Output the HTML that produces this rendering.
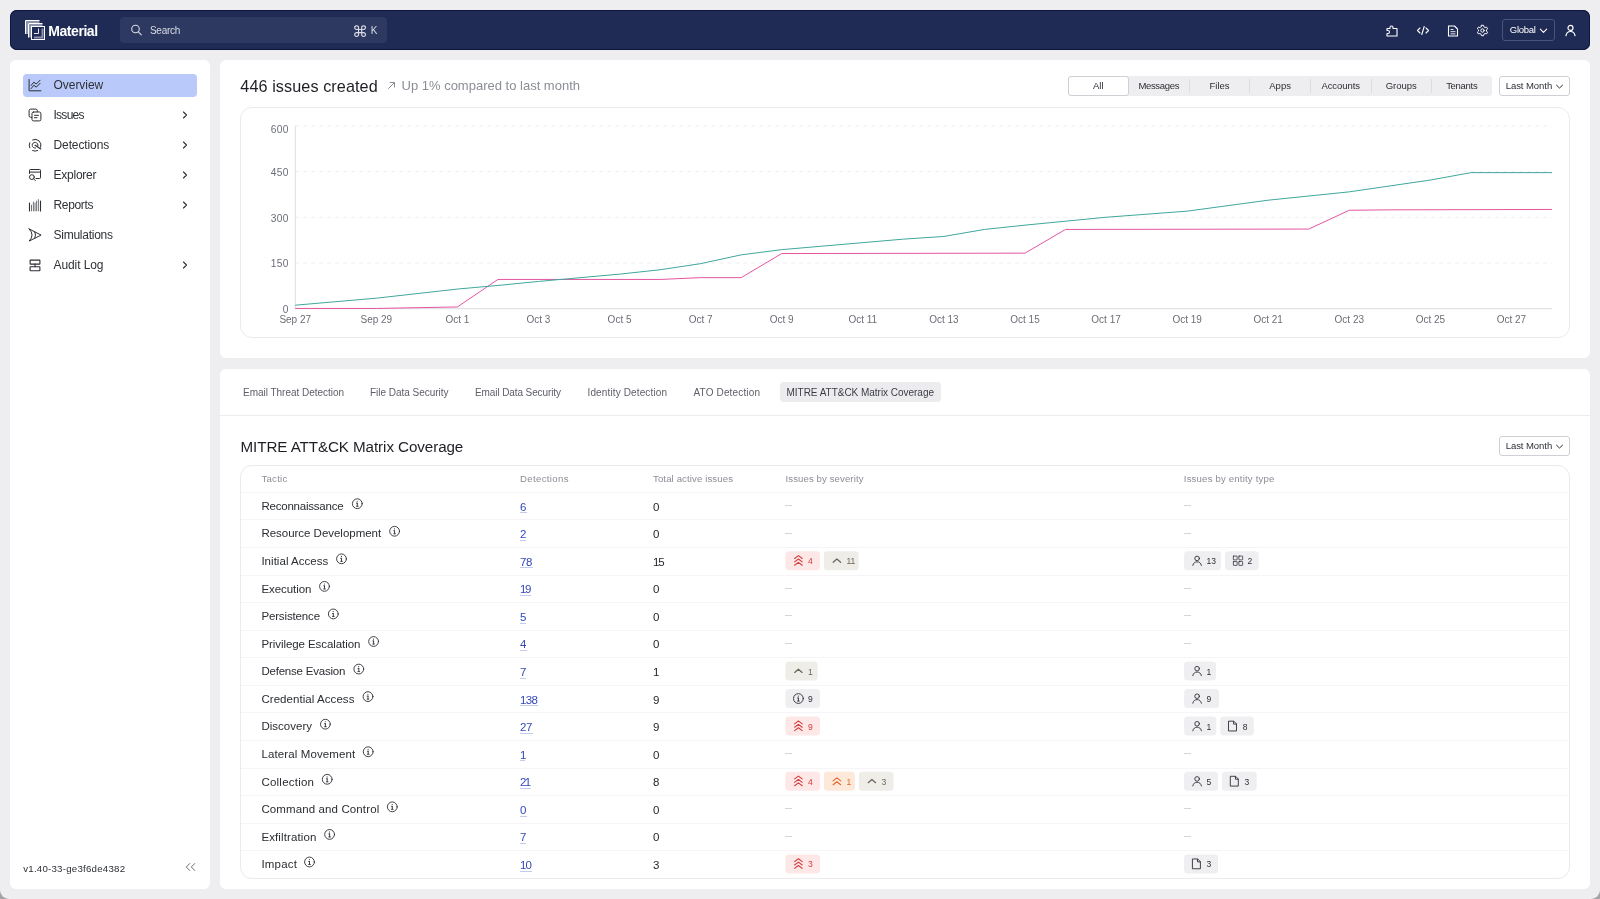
<!DOCTYPE html>
<html lang="en"><head><meta charset="utf-8"><title>Material</title><style>
*{box-sizing:border-box;margin:0;padding:0}
html{background:#a3a3a6}
html,body{width:1600px;height:899px;overflow:hidden;background:#a3a3a6;font-family:"Liberation Sans",sans-serif;color:#1d1f24}
#bgl{position:absolute;left:0;top:0;width:1600px;height:899px;background:#eeeef0;border-radius:0 0 9px 9px}
#root{position:absolute;left:0;top:0;width:1600px;height:899px;will-change:transform}
.abs{position:absolute}
.t{position:absolute;white-space:nowrap}
#topbar{position:absolute;left:10px;top:10px;width:1580px;height:40px;background:#1f2a55;border-radius:7px;box-shadow:inset 0 0 0 1px #0e1541}
#search{position:absolute;left:110px;top:7px;width:267px;height:26px;background:#2d3960;border-radius:4px}
#side{position:absolute;left:10px;top:60px;width:200px;height:829px;background:#fff;border-radius:6px}
#card1{position:absolute;left:220px;top:60px;width:1370px;height:298px;background:#fff;border-radius:6px}
#card2{position:absolute;left:220px;top:369px;width:1370px;height:520px;background:#fff;border-radius:6px}
svg{position:absolute;overflow:visible}
</style></head><body>
<div id="bgl"></div>
<div id="root">
<div id="topbar">
<svg style="left:14px;top:9px" width="25" height="23" viewBox="0 0 25 23" fill="none" stroke="#fff" stroke-width="1" stroke-linecap="butt" stroke-linejoin="miter" ><path d="M3 15V3H15.500" stroke="#8d94b0" stroke-width="2"/><path d="M1.500 15V1.500H15.500" stroke="#fff"/><path d="M6 18.500V6H18.500" stroke="#8d94b0" stroke-width="2"/><path d="M4.500 18.500V4.500H18.500" stroke="#fff"/><rect x="7.500" y="7.500" width="13" height="13" stroke="#fff" fill="#1f2a55"/><path d="M10 14.500H14.500V9.500" stroke="#e6e8f0" stroke-width="1"/><path d="M10 18.500H18.500V9.500" stroke="#8d94b0" stroke-width="2"/></svg>
<div class="t" style="left:38.30px;top:11.60px;font-size:14px;line-height:19px;color:#fff;font-weight:bold;letter-spacing:-0.444px;">Material</div>
<div id="search">
<svg style="left:10px;top:7px" width="13" height="13" viewBox="0 0 13 13" fill="none" stroke="#d9dce6" stroke-width="1.1" stroke-linecap="round" stroke-linejoin="round" ><g transform="translate(0.50 0.00)"><circle cx="5" cy="5" r="3.800"/><path d="M7.800 7.800L10.800 10.800"/></g></svg>
<div class="t" style="left:30.00px;top:6.70px;font-size:10px;line-height:14px;color:#d9dce6;letter-spacing:-0.297px;">Search</div>
<div class="t" style="left:232.200px;top:6.500px;font-size:15.500px;line-height:16px;color:#d9dce6;font-family:'DejaVu Sans',sans-serif">&#8984;</div>
<div class="t" style="left:250.80px;top:6.70px;font-size:10px;line-height:14px;color:#d9dce6;">K</div>
</div>
<svg style="left:1376px;top:15px" width="14" height="13" viewBox="0 0 14 13" fill="none" stroke="#fff" stroke-width="1.1" stroke-linecap="round" stroke-linejoin="round" ><path d="M1 3.500H4V2.500A1.500 1.500 0 0 1 7 2.500V3.500H11V11H1V8.500H2A1.500 1.500 0 0 0 2 5.500H1Z"/></svg>
<svg style="left:1406px;top:15px" width="14" height="11" viewBox="0 0 14 11" fill="none" stroke="#fff" stroke-width="1.1" stroke-linecap="round" stroke-linejoin="round" ><g transform="translate(0.50 0.50)"><path d="M3.500 2.500L1 5L3.500 7.500"/><path d="M9.500 2.500L12 5L9.500 7.500"/><path d="M7.700 1L5.300 9"/></g></svg>
<svg style="left:1437px;top:15px" width="12" height="13" viewBox="0 0 12 13" fill="none" stroke="#fff" stroke-width="1.1" stroke-linecap="round" stroke-linejoin="round" ><g transform="translate(0.50 0.00)"><path d="M1 1H7L10 4V11H1Z"/><path d="M3 4.500H6M3 6.700H8M3 8.900H8" stroke-width="0.900" stroke-linecap="butt"/></g></svg>
<svg style="left:1466px;top:14px" width="13" height="13" viewBox="0 0 13 13" fill="none" stroke="#fff" stroke-width="1" stroke-linecap="round" stroke-linejoin="round" ><g transform="translate(0.50 0.50)"><circle cx="6" cy="6" r="1.700"/><path d="M5 0.800H7L7.400 2.300L8.600 3L10.100 2.600L11.100 4.300L10 5.400V6.600L11.100 7.700L10.100 9.400L8.600 9L7.400 9.700L7 11.200H5L4.600 9.700L3.400 9L1.900 9.400L0.900 7.700L2 6.600V5.400L0.900 4.300L1.900 2.600L3.400 3L4.600 2.300Z"/></g></svg>
<div class="abs" style="left:1492px;top:9px;width:53px;height:21.500px;border:1px solid #4a547a;border-radius:3px"></div>
<div class="t" style="left:1499.80px;top:13.30px;font-size:9.5px;line-height:13px;color:#fff;letter-spacing:-0.272px;">Global</div>
<svg style="left:1529px;top:18px" width="9" height="7" viewBox="0 0 9 7" fill="none" stroke="#fff" stroke-width="1.1" stroke-linecap="round" stroke-linejoin="round" ><g transform="translate(0.50 0.00)"><path d="M0.800 1.200L4 4.300L7.200 1.200"/></g></svg>
<svg style="left:1555px;top:14px" width="12" height="14" viewBox="0 0 12 14" fill="none" stroke="#fff" stroke-width="1.2" stroke-linecap="round" stroke-linejoin="round" ><g transform="translate(0.00 0.30)"><circle cx="5.500" cy="3.600" r="2.500"/><path d="M1 11.400C1.400 8.400 3.300 7.200 5.500 7.200S9.600 8.400 10 11.400"/></g></svg>
</div>
<div id="side">
<div class="abs" style="left:13px;top:13.500px;width:174px;height:23px;background:#b9c9fa;border-radius:4px"></div>
<div class="t" style="left:43.50px;top:17.30px;font-size:12px;line-height:16px;color:#2e3136;letter-spacing:-0.037px;">Overview</div>
<div class="t" style="left:43.50px;top:47.30px;font-size:12px;line-height:16px;color:#2e3136;letter-spacing:-0.736px;">Issues</div>
<svg style="left:171px;top:50px" width="9" height="10" viewBox="0 0 9 10" fill="none" stroke="#2b2e33" stroke-width="1.1" stroke-linecap="round" stroke-linejoin="round" ><g transform="translate(0.00 0.50)"><path d="M2.500 1.500L5.500 4.500L2.500 7.500"/></g></svg>
<div class="t" style="left:43.50px;top:77.30px;font-size:12px;line-height:16px;color:#2e3136;letter-spacing:-0.105px;">Detections</div>
<svg style="left:171px;top:80px" width="9" height="10" viewBox="0 0 9 10" fill="none" stroke="#2b2e33" stroke-width="1.1" stroke-linecap="round" stroke-linejoin="round" ><g transform="translate(0.00 0.50)"><path d="M2.500 1.500L5.500 4.500L2.500 7.500"/></g></svg>
<div class="t" style="left:43.50px;top:107.30px;font-size:12px;line-height:16px;color:#2e3136;letter-spacing:-0.241px;">Explorer</div>
<svg style="left:171px;top:110px" width="9" height="10" viewBox="0 0 9 10" fill="none" stroke="#2b2e33" stroke-width="1.1" stroke-linecap="round" stroke-linejoin="round" ><g transform="translate(0.00 0.50)"><path d="M2.500 1.500L5.500 4.500L2.500 7.500"/></g></svg>
<div class="t" style="left:43.50px;top:137.30px;font-size:12px;line-height:16px;color:#2e3136;letter-spacing:-0.336px;">Reports</div>
<svg style="left:171px;top:140px" width="9" height="10" viewBox="0 0 9 10" fill="none" stroke="#2b2e33" stroke-width="1.1" stroke-linecap="round" stroke-linejoin="round" ><g transform="translate(0.00 0.50)"><path d="M2.500 1.500L5.500 4.500L2.500 7.500"/></g></svg>
<div class="t" style="left:43.50px;top:167.30px;font-size:12px;line-height:16px;color:#2e3136;letter-spacing:-0.253px;">Simulations</div>
<div class="t" style="left:43.50px;top:197.30px;font-size:12px;line-height:16px;color:#2e3136;letter-spacing:-0.088px;">Audit Log</div>
<svg style="left:171px;top:200px" width="9" height="10" viewBox="0 0 9 10" fill="none" stroke="#2b2e33" stroke-width="1.1" stroke-linecap="round" stroke-linejoin="round" ><g transform="translate(0.00 0.50)"><path d="M2.500 1.500L5.500 4.500L2.500 7.500"/></g></svg>
<svg style="left:18px;top:19px" width="14" height="14" viewBox="0 0 14 14" fill="none" stroke="#2b2e33" stroke-width="1" stroke-linecap="round" stroke-linejoin="round" ><g transform="translate(0.50 0.00)"><path d="M0.600 0.500V11.800H12.400"/><path d="M2.600 6.500L5.300 3.200L7.800 5L11.600 1.200"/><path d="M2.600 9.600L5.300 6.300L7.800 8.100L11.600 4.300"/></g></svg>
<svg style="left:18px;top:48px" width="14" height="14" viewBox="0 0 14 14" fill="none" stroke="#2b2e33" stroke-width="1" stroke-linecap="round" stroke-linejoin="round" ><g transform="translate(0.50 0.50)"><path d="M3.200 8.800H2A1.500 1.500 0 0 1 0.600 7.300V2A1.500 1.500 0 0 1 2 0.600H7.300A1.500 1.500 0 0 1 8.800 2V3.200"/><rect x="3.500" y="3.500" width="8.900" height="8.900" rx="1.500"/><path d="M6 6.800H10M6 9.200H8.500"/></g></svg>
<svg style="left:18px;top:78px" width="14" height="14" viewBox="0 0 14 14" fill="none" stroke="#2b2e33" stroke-width="1" stroke-linecap="round" stroke-linejoin="round" ><g transform="translate(0.60 0.75)"><path d="M1.150 8.990A5.900 5.900 0 0 1 1.150 4.010"/><path d="M4.010 1.150A5.900 5.900 0 0 1 12.040 8.520"/><path d="M8.990 11.850A5.900 5.900 0 0 1 4.010 11.850"/><path d="M7 9.360A2.900 2.900 0 1 1 9.300 7.250"/><path d="M6.500 6.500L12.200 10.200" stroke-width="1.200"/></g></svg>
<svg style="left:18px;top:108px" width="14" height="14" viewBox="0 0 14 14" fill="none" stroke="#2b2e33" stroke-width="1" stroke-linecap="round" stroke-linejoin="round" ><g transform="translate(0.50 0.50)"><path d="M1 5V1.800A0.800 0.800 0 0 1 1.800 1H11.200A0.800 0.800 0 0 1 12 1.800V9.200A0.800 0.800 0 0 1 11.200 10H7.500"/><path d="M1 3.600H12"/><circle cx="3.400" cy="8.600" r="2.400"/><path d="M5.200 10.400L6.800 12"/></g></svg>
<svg style="left:18px;top:139px" width="14" height="13" viewBox="0 0 14 13" fill="none" stroke="#2b2e33" stroke-width="1" stroke-linecap="round" stroke-linejoin="round" ><g transform="translate(0.50 0.00)"><path d="M1 4V11.900M12 2.100V11.900" stroke-width="1.100"/><path d="M3 6.200V11.900M4.900 3.100V11.900M6.500 4V11.900M8.100 2.100V11.900M9.900 0.600V11.900" stroke="#6f7378"/></g></svg>
<svg style="left:18px;top:168px" width="14" height="14" viewBox="0 0 14 14" fill="none" stroke="#2b2e33" stroke-width="1" stroke-linecap="round" stroke-linejoin="round" ><g transform="translate(0.50 0.50)"><path d="M0.600 0.400L12.600 6.600L0.600 12.600Q6.600 6.500 0.600 0.400Z"/><path d="M6.300 3.350Q7.900 6.500 6.300 9.750"/></g></svg>
<svg style="left:19px;top:199px" width="12" height="13" viewBox="0 0 12 13" fill="none" stroke="#2b2e33" stroke-width="1.1" stroke-linecap="round" stroke-linejoin="round" ><g transform="translate(0.50 0.50)"><rect x="0.600" y="0.600" width="9.800" height="4" rx="0.400"/><rect x="0.600" y="7.200" width="9.800" height="4" rx="0.400"/><path d="M5.500 4.600V7.200"/></g></svg>
<div class="t" style="left:13.20px;top:801.80px;font-size:9.7px;line-height:14px;color:#2b2e33;letter-spacing:0.230px;">v1.40-33-ge3f6de4382</div>
<svg style="left:175px;top:802px" width="12" height="11" viewBox="0 0 12 11" fill="none" stroke="#6b6e76" stroke-width="1" stroke-linecap="round" stroke-linejoin="round" ><path d="M4.800 1.500L1.300 5L4.800 8.500"/><path d="M9.800 1.500L6.300 5L9.800 8.500"/></svg>
</div>
<div id="card1">
<div class="t" style="left:20.30px;top:15.80px;font-size:16.2px;line-height:21px;color:#1d1f24;letter-spacing:0.089px;">446 issues created</div>
<svg style="left:167px;top:21px" width="10" height="10" viewBox="0 0 10 10" fill="none" stroke="#8b8e96" stroke-width="1" stroke-linecap="round" stroke-linejoin="round" ><path d="M1.500 7.500L7.500 1.500M3 1.500H7.500V6"/></svg>
<div class="t" style="left:181.50px;top:16.60px;font-size:13px;line-height:18px;color:#8b8e96;letter-spacing:0.001px;">Up 1% compared to last month</div>
<div class="abs" style="left:848px;top:16px;width:424px;height:20px;background:#eeeef0;border-radius:3px"></div>
<div class="abs" style="left:848px;top:16px;width:61px;height:20px;background:#fff;border:1px solid #cfd0d6;border-radius:3px"></div>
<div class="t" style="left:873.02px;top:19.10px;font-size:9.5px;line-height:13px;color:#2b2e33;">All</div>
<div class="t" style="left:918.40px;top:19.10px;font-size:9.5px;line-height:13px;color:#2b2e33;letter-spacing:-0.328px;">Messages</div>
<div class="t" style="left:989.47px;top:19.10px;font-size:9.5px;line-height:13px;color:#2b2e33;">Files</div>
<div class="abs" style="left:968.7px;top:19px;width:1px;height:14px;background:#dcdde2"></div>
<div class="t" style="left:1049.27px;top:19.10px;font-size:9.5px;line-height:13px;color:#2b2e33;">Apps</div>
<div class="abs" style="left:1029.3px;top:19px;width:1px;height:14px;background:#dcdde2"></div>
<div class="t" style="left:1101.45px;top:19.10px;font-size:9.5px;line-height:13px;color:#2b2e33;letter-spacing:-0.082px;">Accounts</div>
<div class="abs" style="left:1089.9px;top:19px;width:1px;height:14px;background:#dcdde2"></div>
<div class="t" style="left:1165.72px;top:19.10px;font-size:9.5px;line-height:13px;color:#2b2e33;">Groups</div>
<div class="abs" style="left:1150.5px;top:19px;width:1px;height:14px;background:#dcdde2"></div>
<div class="t" style="left:1226.15px;top:19.10px;font-size:9.5px;line-height:13px;color:#2b2e33;letter-spacing:-0.296px;">Tenants</div>
<div class="abs" style="left:1211.1px;top:19px;width:1px;height:14px;background:#dcdde2"></div>
<div class="abs" style="left:1279px;top:16px;width:71px;height:20px;border:1px solid #cfd0d6;border-radius:3px;background:#fff"></div>
<div class="t" style="left:1285.70px;top:19.10px;font-size:9.5px;line-height:13px;color:#2b2e33;letter-spacing:-0.055px;">Last Month</div>
<svg style="left:1335px;top:24px" width="9" height="7" viewBox="0 0 9 7" fill="none" stroke="#2b2e33" stroke-width="1" stroke-linecap="round" stroke-linejoin="round" ><g transform="translate(0.50 0.00)"><path d="M1 1.200L4 4L7 1.200"/></g></svg>
<div class="abs" style="left:20px;top:47px;width:1330px;height:231px;border:1px solid #ebebee;border-radius:12px"></div>
<svg style="left:0;top:0" width="1370" height="298" viewBox="0 0 1370 298" font-family="Liberation Sans, sans-serif"><line x1="75.25" x2="1332" y1="203.00" y2="203.00" stroke="#eeeef1" stroke-width="1" stroke-dasharray="4 4"/><line x1="75.25" x2="1332" y1="157.30" y2="157.30" stroke="#eeeef1" stroke-width="1" stroke-dasharray="4 4"/><line x1="75.25" x2="1332" y1="111.60" y2="111.60" stroke="#eeeef1" stroke-width="1" stroke-dasharray="4 4"/><line x1="75.25" x2="1332" y1="65.90" y2="65.90" stroke="#eeeef1" stroke-width="1" stroke-dasharray="4 4"/><line x1="75.25" x2="75.25" y1="65.90" y2="248.70" stroke="#dcdce0" stroke-width="1"/><line x1="75.25" x2="1332" y1="248.70" y2="248.70" stroke="#dcdce0" stroke-width="1"/><text x="68.800" y="252.90" text-anchor="end" font-size="10.2" letter-spacing="0.35" fill="#6b6e76">0</text><text x="68.800" y="207.20" text-anchor="end" font-size="10.2" letter-spacing="0.35" fill="#6b6e76">150</text><text x="68.800" y="161.50" text-anchor="end" font-size="10.2" letter-spacing="0.35" fill="#6b6e76">300</text><text x="68.800" y="115.80" text-anchor="end" font-size="10.2" letter-spacing="0.35" fill="#6b6e76">450</text><text x="68.800" y="73.30" text-anchor="end" font-size="10.2" letter-spacing="0.35" fill="#6b6e76">600</text><text x="75.25" y="263.300" text-anchor="middle" font-size="10" fill="#6b6e76">Sep 27</text><text x="156.33" y="263.300" text-anchor="middle" font-size="10" fill="#6b6e76">Sep 29</text><text x="237.41" y="263.300" text-anchor="middle" font-size="10" fill="#6b6e76">Oct 1</text><text x="318.49" y="263.300" text-anchor="middle" font-size="10" fill="#6b6e76">Oct 3</text><text x="399.57" y="263.300" text-anchor="middle" font-size="10" fill="#6b6e76">Oct 5</text><text x="480.65" y="263.300" text-anchor="middle" font-size="10" fill="#6b6e76">Oct 7</text><text x="561.73" y="263.300" text-anchor="middle" font-size="10" fill="#6b6e76">Oct 9</text><text x="642.81" y="263.300" text-anchor="middle" font-size="10" fill="#6b6e76">Oct 11</text><text x="723.89" y="263.300" text-anchor="middle" font-size="10" fill="#6b6e76">Oct 13</text><text x="804.97" y="263.300" text-anchor="middle" font-size="10" fill="#6b6e76">Oct 15</text><text x="886.05" y="263.300" text-anchor="middle" font-size="10" fill="#6b6e76">Oct 17</text><text x="967.13" y="263.300" text-anchor="middle" font-size="10" fill="#6b6e76">Oct 19</text><text x="1048.21" y="263.300" text-anchor="middle" font-size="10" fill="#6b6e76">Oct 21</text><text x="1129.29" y="263.300" text-anchor="middle" font-size="10" fill="#6b6e76">Oct 23</text><text x="1210.37" y="263.300" text-anchor="middle" font-size="10" fill="#6b6e76">Oct 25</text><text x="1291.45" y="263.300" text-anchor="middle" font-size="10" fill="#6b6e76">Oct 27</text><polyline fill="none" stroke="#e5559f" stroke-width="1" stroke-linejoin="round" points="75.25,248.45 156.33,248.45 237.41,246.95 277.95,219.45 440.11,219.45 480.65,217.65 521.19,217.65 561.73,193.55 804.97,193.15 845.51,169.45 1088.75,169.05 1129.29,150.25 1169.83,149.85 1331.99,149.45"/><polyline fill="none" stroke="#3fa79c" stroke-width="1" stroke-linejoin="round" points="75.25,245.20 156.33,238.20 237.41,229.05 277.95,225.45 318.49,221.45 399.57,214.15 440.11,209.75 480.65,203.65 521.19,194.85 561.73,189.65 642.81,182.65 683.35,179.15 723.89,176.45 764.43,169.45 804.97,165.15 886.05,157.25 967.13,151.15 1048.21,140.20 1129.29,131.85 1210.37,120.05 1250.91,112.65 1331.99,112.65"/></svg>
</div>
<div id="card2">
<div class="t" style="left:23.00px;top:16.60px;font-size:10px;line-height:14px;color:#5d6068;letter-spacing:-0.025px;">Email Threat Detection</div>
<div class="t" style="left:150.00px;top:16.60px;font-size:10px;line-height:14px;color:#5d6068;letter-spacing:-0.024px;">File Data Security</div>
<div class="t" style="left:255.00px;top:16.60px;font-size:10px;line-height:14px;color:#5d6068;letter-spacing:-0.100px;">Email Data Security</div>
<div class="t" style="left:367.50px;top:16.60px;font-size:10px;line-height:14px;color:#5d6068;letter-spacing:0.131px;">Identity Detection</div>
<div class="t" style="left:473.50px;top:16.60px;font-size:10px;line-height:14px;color:#5d6068;letter-spacing:0.153px;">ATO Detection</div>
<div class="abs" style="left:559.5px;top:12.8px;width:161px;height:20px;background:#ececef;border-radius:4px"></div>
<div class="t" style="left:566.50px;top:16.60px;font-size:10px;line-height:14px;color:#3a3d44;letter-spacing:-0.025px;">MITRE ATT&amp;CK Matrix Coverage</div>
<div class="abs" style="left:0;top:46.0px;width:1370px;height:1px;background:#ededf0"></div>
<div class="t" style="left:20.50px;top:67.80px;font-size:15.2px;line-height:20px;color:#1d1f24;letter-spacing:-0.083px;">MITRE ATT&amp;CK Matrix Coverage</div>
<div class="abs" style="left:1279px;top:67px;width:71px;height:20px;border:1px solid #cfd0d6;border-radius:3px;background:#fff"></div>
<div class="t" style="left:1285.70px;top:70.10px;font-size:9.5px;line-height:13px;color:#2b2e33;letter-spacing:-0.055px;">Last Month</div>
<svg style="left:1335px;top:75px" width="9" height="7" viewBox="0 0 9 7" fill="none" stroke="#2b2e33" stroke-width="1" stroke-linecap="round" stroke-linejoin="round" ><g transform="translate(0.50 0.00)"><path d="M1 1.200L4 4L7 1.200"/></g></svg>
<div class="abs" style="left:20px;top:96px;width:1330px;height:414px;border:1px solid #ebebee;border-radius:12px"></div>
<div class="t" style="left:41.50px;top:102.60px;font-size:9.6px;line-height:14px;color:#8b8e96;letter-spacing:0.242px;">Tactic</div>
<div class="t" style="left:300.00px;top:102.60px;font-size:9.6px;line-height:14px;color:#8b8e96;letter-spacing:0.349px;">Detections</div>
<div class="t" style="left:433.00px;top:102.60px;font-size:9.6px;line-height:14px;color:#8b8e96;letter-spacing:0.117px;">Total active issues</div>
<div class="t" style="left:565.50px;top:102.60px;font-size:9.6px;line-height:14px;color:#8b8e96;letter-spacing:0.100px;">Issues by severity</div>
<div class="t" style="left:963.80px;top:102.60px;font-size:9.6px;line-height:14px;color:#8b8e96;letter-spacing:0.181px;">Issues by entity type</div>
<div class="abs" style="left:21px;top:123.0px;width:1328px;height:1px;background:#f5f5f7"></div>
<div class="t" style="left:41.40px;top:128.90px;font-size:11.5px;line-height:16px;color:#2a2d32;letter-spacing:-0.214px;">Reconnaissance</div>
<svg style="left:131px;top:129px" width="12" height="12" viewBox="0 0 12 12" fill="none" stroke="#2b2e33" stroke-width="0.9" stroke-linecap="round" stroke-linejoin="round" ><g transform="translate(0.80 0.20)"><circle cx="5.500" cy="5.500" r="4.900"/><path d="M5.500 5V8"/><path d="M4.600 5H5.500M4.600 8H6.400" stroke-width="0.800"/><circle cx="5.400" cy="3.100" r="0.550" fill="#2b2e33" stroke="none"/></g></svg>
<div class="t" style="left:300.00px;top:129.60px;font-size:11.5px;line-height:16px;color:#3348b8;">6</div>
<div class="abs" style="left:300.0px;top:143.3px;width:6.5px;height:1px;background:#c3cbef"></div>
<div class="t" style="left:433.00px;top:129.60px;font-size:11.5px;line-height:16px;color:#23262b;">0</div>
<div class="abs" style="left:565.4px;top:135.9px;width:6.500px;height:1px;background:#d3d4df"></div>
<div class="abs" style="left:964.1px;top:135.9px;width:6.500px;height:1px;background:#d3d4df"></div>
<div class="abs" style="left:21px;top:150.0px;width:1328px;height:1px;background:#f5f5f7"></div>
<div class="t" style="left:41.40px;top:156.46px;font-size:11.5px;line-height:16px;color:#2a2d32;letter-spacing:-0.022px;">Resource Development</div>
<svg style="left:169px;top:156px" width="12" height="12" viewBox="0 0 12 12" fill="none" stroke="#2b2e33" stroke-width="0.9" stroke-linecap="round" stroke-linejoin="round" ><g transform="translate(0.10 0.76)"><circle cx="5.500" cy="5.500" r="4.900"/><path d="M5.500 5V8"/><path d="M4.600 5H5.500M4.600 8H6.400" stroke-width="0.800"/><circle cx="5.400" cy="3.100" r="0.550" fill="#2b2e33" stroke="none"/></g></svg>
<div class="t" style="left:300.00px;top:157.16px;font-size:11.5px;line-height:16px;color:#3348b8;">2</div>
<div class="abs" style="left:300.0px;top:170.9px;width:6.0px;height:1px;background:#c3cbef"></div>
<div class="t" style="left:433.00px;top:157.16px;font-size:11.5px;line-height:16px;color:#23262b;">0</div>
<div class="abs" style="left:565.4px;top:163.5px;width:6.500px;height:1px;background:#d3d4df"></div>
<div class="abs" style="left:964.1px;top:163.5px;width:6.500px;height:1px;background:#d3d4df"></div>
<div class="abs" style="left:21px;top:178.0px;width:1328px;height:1px;background:#f5f5f7"></div>
<div class="t" style="left:41.40px;top:184.02px;font-size:11.5px;line-height:16px;color:#2a2d32;letter-spacing:0.033px;">Initial Access</div>
<svg style="left:116px;top:184px" width="12" height="12" viewBox="0 0 12 12" fill="none" stroke="#2b2e33" stroke-width="0.9" stroke-linecap="round" stroke-linejoin="round" ><g transform="translate(0.00 0.32)"><circle cx="5.500" cy="5.500" r="4.900"/><path d="M5.500 5V8"/><path d="M4.600 5H5.500M4.600 8H6.400" stroke-width="0.800"/><circle cx="5.400" cy="3.100" r="0.550" fill="#2b2e33" stroke="none"/></g></svg>
<div class="t" style="left:300.00px;top:184.72px;font-size:11.5px;line-height:16px;color:#3348b8;letter-spacing:-0.292px;">78</div>
<div class="abs" style="left:300.0px;top:198.4px;width:12.5px;height:1px;background:#c3cbef"></div>
<div class="t" style="left:433.00px;top:184.72px;font-size:11.5px;line-height:16px;color:#23262b;letter-spacing:-1.192px;">15</div>
<svg style="left:565px;top:182px" width="35.6" height="20" viewBox="0 0 35.6 20" fill="none" stroke="none" stroke-width="0" stroke-linecap="round" stroke-linejoin="round" ><g transform="translate(0.40 0.22)"><rect x="0" y="0" width="34.6" height="19" rx="3.500" fill="#fde7e7" stroke="none"/></g></svg>
<svg style="left:573px;top:185px" width="11" height="12.3" viewBox="0 0 11 12.3" fill="none" stroke="#d63a3a" stroke-width="1.05" stroke-linecap="round" stroke-linejoin="round" ><g transform="translate(0.40 0.77)"><path d="M1.200 3.700L5 0.800L8.800 3.700"/><path d="M1.200 7.100L5 4.200L8.800 7.100"/><path d="M1.200 10.500L5 7.600L8.800 10.500"/></g></svg>
<div class="t" style="left:587.90px;top:186.32px;font-size:8.5px;line-height:12px;color:#d63a3a;">4</div>
<svg style="left:603px;top:182px" width="35.7" height="20" viewBox="0 0 35.7 20" fill="none" stroke="none" stroke-width="0" stroke-linecap="round" stroke-linejoin="round" ><g transform="translate(0.90 0.22)"><rect x="0" y="0" width="34.7" height="19" rx="3.500" fill="#efede8" stroke="none"/></g></svg>
<svg style="left:611px;top:186px" width="11" height="11" viewBox="0 0 11 11" fill="none" stroke="#6b6558" stroke-width="1.25" stroke-linecap="round" stroke-linejoin="round" ><g transform="translate(0.90 0.72)"><path d="M1.300 6.500L5 3.300L8.700 6.500"/></g></svg>
<div class="t" style="left:626.40px;top:186.32px;font-size:8.5px;line-height:12px;color:#6b6558;">11</div>
<svg style="left:964px;top:182px" width="38" height="20" viewBox="0 0 38 20" fill="none" stroke="none" stroke-width="0" stroke-linecap="round" stroke-linejoin="round" ><g transform="translate(0.10 0.22)"><rect x="0" y="0" width="37.0" height="19" rx="3.500" fill="#efeff2" stroke="none"/></g></svg>
<svg style="left:972px;top:186px" width="11" height="12" viewBox="0 0 11 12" fill="none" stroke="#2b2e33" stroke-width="0.9" stroke-linecap="round" stroke-linejoin="round" ><g transform="translate(0.10 0.22)"><circle cx="5" cy="3.200" r="2.300"/><path d="M0.700 10.200C1.200 7.600 3 6.600 5 6.600S8.800 7.600 9.300 10.200"/></g></svg>
<div class="t" style="left:986.60px;top:186.32px;font-size:8.5px;line-height:12px;color:#2b2e33;">13</div>
<svg style="left:1005px;top:182px" width="34.6" height="20" viewBox="0 0 34.6 20" fill="none" stroke="none" stroke-width="0" stroke-linecap="round" stroke-linejoin="round" ><g transform="translate(0.00 0.22)"><rect x="0" y="0" width="33.6" height="19" rx="3.500" fill="#efeff2" stroke="none"/></g></svg>
<svg style="left:1012px;top:186px" width="11.5" height="11.5" viewBox="0 0 11.5 11.5" fill="none" stroke="#2b2e33" stroke-width="0.75" stroke-linecap="round" stroke-linejoin="round" ><g transform="translate(0.75 0.47)"><rect x="0.600" y="0.600" width="3.800" height="3.800" rx="0.300"/><rect x="6.100" y="0.600" width="3.800" height="3.800" rx="0.300"/><rect x="0.600" y="6.100" width="3.800" height="3.800" rx="0.300"/><rect x="6.100" y="6.100" width="3.800" height="3.800" rx="0.300"/></g></svg>
<div class="t" style="left:1027.50px;top:186.32px;font-size:8.5px;line-height:12px;color:#2b2e33;">2</div>
<div class="abs" style="left:21px;top:206.0px;width:1328px;height:1px;background:#f5f5f7"></div>
<div class="t" style="left:41.40px;top:211.58px;font-size:11.5px;line-height:16px;color:#2a2d32;letter-spacing:-0.063px;">Execution</div>
<svg style="left:99px;top:211px" width="12" height="12" viewBox="0 0 12 12" fill="none" stroke="#2b2e33" stroke-width="0.9" stroke-linecap="round" stroke-linejoin="round" ><g transform="translate(0.00 0.88)"><circle cx="5.500" cy="5.500" r="4.900"/><path d="M5.500 5V8"/><path d="M4.600 5H5.500M4.600 8H6.400" stroke-width="0.800"/><circle cx="5.400" cy="3.100" r="0.550" fill="#2b2e33" stroke="none"/></g></svg>
<div class="t" style="left:300.00px;top:212.28px;font-size:11.5px;line-height:16px;color:#3348b8;letter-spacing:-1.392px;">19</div>
<div class="abs" style="left:300.0px;top:226.0px;width:11.4px;height:1px;background:#c3cbef"></div>
<div class="t" style="left:433.00px;top:212.28px;font-size:11.5px;line-height:16px;color:#23262b;">0</div>
<div class="abs" style="left:565.4px;top:218.6px;width:6.500px;height:1px;background:#d3d4df"></div>
<div class="abs" style="left:964.1px;top:218.6px;width:6.500px;height:1px;background:#d3d4df"></div>
<div class="abs" style="left:21px;top:233.0px;width:1328px;height:1px;background:#f5f5f7"></div>
<div class="t" style="left:41.40px;top:239.14px;font-size:11.5px;line-height:16px;color:#2a2d32;letter-spacing:-0.138px;">Persistence</div>
<svg style="left:107px;top:239px" width="12" height="12" viewBox="0 0 12 12" fill="none" stroke="#2b2e33" stroke-width="0.9" stroke-linecap="round" stroke-linejoin="round" ><g transform="translate(0.80 0.44)"><circle cx="5.500" cy="5.500" r="4.900"/><path d="M5.500 5V8"/><path d="M4.600 5H5.500M4.600 8H6.400" stroke-width="0.800"/><circle cx="5.400" cy="3.100" r="0.550" fill="#2b2e33" stroke="none"/></g></svg>
<div class="t" style="left:300.00px;top:239.84px;font-size:11.5px;line-height:16px;color:#3348b8;">5</div>
<div class="abs" style="left:300.0px;top:253.5px;width:6.0px;height:1px;background:#c3cbef"></div>
<div class="t" style="left:433.00px;top:239.84px;font-size:11.5px;line-height:16px;color:#23262b;">0</div>
<div class="abs" style="left:565.4px;top:246.1px;width:6.500px;height:1px;background:#d3d4df"></div>
<div class="abs" style="left:964.1px;top:246.1px;width:6.500px;height:1px;background:#d3d4df"></div>
<div class="abs" style="left:21px;top:261.0px;width:1328px;height:1px;background:#f5f5f7"></div>
<div class="t" style="left:41.40px;top:266.70px;font-size:11.5px;line-height:16px;color:#2a2d32;letter-spacing:-0.071px;">Privilege Escalation</div>
<svg style="left:148px;top:267px" width="12" height="12" viewBox="0 0 12 12" fill="none" stroke="#2b2e33" stroke-width="0.9" stroke-linecap="round" stroke-linejoin="round" ><g transform="translate(0.10 0.00)"><circle cx="5.500" cy="5.500" r="4.900"/><path d="M5.500 5V8"/><path d="M4.600 5H5.500M4.600 8H6.400" stroke-width="0.800"/><circle cx="5.400" cy="3.100" r="0.550" fill="#2b2e33" stroke="none"/></g></svg>
<div class="t" style="left:300.00px;top:267.40px;font-size:11.5px;line-height:16px;color:#3348b8;">4</div>
<div class="abs" style="left:300.0px;top:281.1px;width:6.5px;height:1px;background:#c3cbef"></div>
<div class="t" style="left:433.00px;top:267.40px;font-size:11.5px;line-height:16px;color:#23262b;">0</div>
<div class="abs" style="left:565.4px;top:273.7px;width:6.500px;height:1px;background:#d3d4df"></div>
<div class="abs" style="left:964.1px;top:273.7px;width:6.500px;height:1px;background:#d3d4df"></div>
<div class="abs" style="left:21px;top:288.0px;width:1328px;height:1px;background:#f5f5f7"></div>
<div class="t" style="left:41.40px;top:294.26px;font-size:11.5px;line-height:16px;color:#2a2d32;letter-spacing:-0.210px;">Defense Evasion</div>
<svg style="left:133px;top:294px" width="12" height="12" viewBox="0 0 12 12" fill="none" stroke="#2b2e33" stroke-width="0.9" stroke-linecap="round" stroke-linejoin="round" ><g transform="translate(0.30 0.56)"><circle cx="5.500" cy="5.500" r="4.900"/><path d="M5.500 5V8"/><path d="M4.600 5H5.500M4.600 8H6.400" stroke-width="0.800"/><circle cx="5.400" cy="3.100" r="0.550" fill="#2b2e33" stroke="none"/></g></svg>
<div class="t" style="left:300.00px;top:294.96px;font-size:11.5px;line-height:16px;color:#3348b8;">7</div>
<div class="abs" style="left:300.0px;top:308.7px;width:5.8px;height:1px;background:#c3cbef"></div>
<div class="t" style="left:433.00px;top:294.96px;font-size:11.5px;line-height:16px;color:#23262b;">1</div>
<svg style="left:565px;top:292px" width="33.2" height="20" viewBox="0 0 33.2 20" fill="none" stroke="none" stroke-width="0" stroke-linecap="round" stroke-linejoin="round" ><g transform="translate(0.40 0.46)"><rect x="0" y="0" width="32.2" height="19" rx="3.500" fill="#efede8" stroke="none"/></g></svg>
<svg style="left:573px;top:296px" width="11" height="11" viewBox="0 0 11 11" fill="none" stroke="#6b6558" stroke-width="1.25" stroke-linecap="round" stroke-linejoin="round" ><g transform="translate(0.40 0.96)"><path d="M1.300 6.500L5 3.300L8.700 6.500"/></g></svg>
<div class="t" style="left:587.90px;top:296.56px;font-size:8.5px;line-height:12px;color:#6b6558;">1</div>
<svg style="left:964px;top:292px" width="33" height="20" viewBox="0 0 33 20" fill="none" stroke="none" stroke-width="0" stroke-linecap="round" stroke-linejoin="round" ><g transform="translate(0.10 0.46)"><rect x="0" y="0" width="32.0" height="19" rx="3.500" fill="#efeff2" stroke="none"/></g></svg>
<svg style="left:972px;top:296px" width="11" height="12" viewBox="0 0 11 12" fill="none" stroke="#2b2e33" stroke-width="0.9" stroke-linecap="round" stroke-linejoin="round" ><g transform="translate(0.10 0.46)"><circle cx="5" cy="3.200" r="2.300"/><path d="M0.700 10.200C1.200 7.600 3 6.600 5 6.600S8.800 7.600 9.300 10.200"/></g></svg>
<div class="t" style="left:986.60px;top:296.56px;font-size:8.5px;line-height:12px;color:#2b2e33;">1</div>
<div class="abs" style="left:21px;top:316.0px;width:1328px;height:1px;background:#f5f5f7"></div>
<div class="t" style="left:41.40px;top:321.82px;font-size:11.5px;line-height:16px;color:#2a2d32;letter-spacing:0.060px;">Credential Access</div>
<svg style="left:142px;top:322px" width="12" height="12" viewBox="0 0 12 12" fill="none" stroke="#2b2e33" stroke-width="0.9" stroke-linecap="round" stroke-linejoin="round" ><g transform="translate(0.50 0.12)"><circle cx="5.500" cy="5.500" r="4.900"/><path d="M5.500 5V8"/><path d="M4.600 5H5.500M4.600 8H6.400" stroke-width="0.800"/><circle cx="5.400" cy="3.100" r="0.550" fill="#2b2e33" stroke="none"/></g></svg>
<div class="t" style="left:300.00px;top:322.52px;font-size:11.5px;line-height:16px;color:#3348b8;letter-spacing:-0.694px;">138</div>
<div class="abs" style="left:300.0px;top:336.2px;width:17.8px;height:1px;background:#c3cbef"></div>
<div class="t" style="left:433.00px;top:322.52px;font-size:11.5px;line-height:16px;color:#23262b;">9</div>
<svg style="left:565px;top:320px" width="35.6" height="20" viewBox="0 0 35.6 20" fill="none" stroke="none" stroke-width="0" stroke-linecap="round" stroke-linejoin="round" ><g transform="translate(0.40 0.02)"><rect x="0" y="0" width="34.6" height="19" rx="3.500" fill="#efeff2" stroke="none"/></g></svg>
<svg style="left:572px;top:324px" width="12" height="12" viewBox="0 0 12 12" fill="none" stroke="#2b2e33" stroke-width="0.9" stroke-linecap="round" stroke-linejoin="round" ><g transform="translate(0.90 0.02)"><circle cx="5.500" cy="5.500" r="4.900"/><path d="M5.500 5V8"/><path d="M4.600 5H5.500M4.600 8H6.400" stroke-width="0.800"/><circle cx="5.400" cy="3.100" r="0.550" fill="#2b2e33" stroke="none"/></g></svg>
<div class="t" style="left:587.90px;top:324.12px;font-size:8.5px;line-height:12px;color:#2b2e33;">9</div>
<svg style="left:964px;top:320px" width="36" height="20" viewBox="0 0 36 20" fill="none" stroke="none" stroke-width="0" stroke-linecap="round" stroke-linejoin="round" ><g transform="translate(0.10 0.02)"><rect x="0" y="0" width="35.0" height="19" rx="3.500" fill="#efeff2" stroke="none"/></g></svg>
<svg style="left:972px;top:324px" width="11" height="12" viewBox="0 0 11 12" fill="none" stroke="#2b2e33" stroke-width="0.9" stroke-linecap="round" stroke-linejoin="round" ><g transform="translate(0.10 0.02)"><circle cx="5" cy="3.200" r="2.300"/><path d="M0.700 10.200C1.200 7.600 3 6.600 5 6.600S8.800 7.600 9.300 10.200"/></g></svg>
<div class="t" style="left:986.60px;top:324.12px;font-size:8.5px;line-height:12px;color:#2b2e33;">9</div>
<div class="abs" style="left:21px;top:343.0px;width:1328px;height:1px;background:#f5f5f7"></div>
<div class="t" style="left:41.40px;top:349.38px;font-size:11.5px;line-height:16px;color:#2a2d32;letter-spacing:0.015px;">Discovery</div>
<svg style="left:99px;top:349px" width="12" height="12" viewBox="0 0 12 12" fill="none" stroke="#2b2e33" stroke-width="0.9" stroke-linecap="round" stroke-linejoin="round" ><g transform="translate(0.90 0.68)"><circle cx="5.500" cy="5.500" r="4.900"/><path d="M5.500 5V8"/><path d="M4.600 5H5.500M4.600 8H6.400" stroke-width="0.800"/><circle cx="5.400" cy="3.100" r="0.550" fill="#2b2e33" stroke="none"/></g></svg>
<div class="t" style="left:300.00px;top:350.08px;font-size:11.5px;line-height:16px;color:#3348b8;letter-spacing:-0.292px;">27</div>
<div class="abs" style="left:300.0px;top:363.8px;width:12.5px;height:1px;background:#c3cbef"></div>
<div class="t" style="left:433.00px;top:350.08px;font-size:11.5px;line-height:16px;color:#23262b;">9</div>
<svg style="left:565px;top:347px" width="35.6" height="20" viewBox="0 0 35.6 20" fill="none" stroke="none" stroke-width="0" stroke-linecap="round" stroke-linejoin="round" ><g transform="translate(0.40 0.58)"><rect x="0" y="0" width="34.6" height="19" rx="3.500" fill="#fde7e7" stroke="none"/></g></svg>
<svg style="left:573px;top:351px" width="11" height="12.3" viewBox="0 0 11 12.3" fill="none" stroke="#d63a3a" stroke-width="1.05" stroke-linecap="round" stroke-linejoin="round" ><g transform="translate(0.40 0.13)"><path d="M1.200 3.700L5 0.800L8.800 3.700"/><path d="M1.200 7.100L5 4.200L8.800 7.100"/><path d="M1.200 10.500L5 7.600L8.800 10.500"/></g></svg>
<div class="t" style="left:587.90px;top:351.68px;font-size:8.5px;line-height:12px;color:#d63a3a;">9</div>
<svg style="left:964px;top:347px" width="33.2" height="20" viewBox="0 0 33.2 20" fill="none" stroke="none" stroke-width="0" stroke-linecap="round" stroke-linejoin="round" ><g transform="translate(0.10 0.58)"><rect x="0" y="0" width="32.2" height="19" rx="3.500" fill="#efeff2" stroke="none"/></g></svg>
<svg style="left:972px;top:351px" width="11" height="12" viewBox="0 0 11 12" fill="none" stroke="#2b2e33" stroke-width="0.9" stroke-linecap="round" stroke-linejoin="round" ><g transform="translate(0.10 0.58)"><circle cx="5" cy="3.200" r="2.300"/><path d="M0.700 10.200C1.200 7.600 3 6.600 5 6.600S8.800 7.600 9.300 10.200"/></g></svg>
<div class="t" style="left:986.60px;top:351.68px;font-size:8.5px;line-height:12px;color:#2b2e33;">1</div>
<svg style="left:1000px;top:347px" width="34.6" height="20" viewBox="0 0 34.6 20" fill="none" stroke="none" stroke-width="0" stroke-linecap="round" stroke-linejoin="round" ><g transform="translate(0.20 0.58)"><rect x="0" y="0" width="33.6" height="19" rx="3.500" fill="#efeff2" stroke="none"/></g></svg>
<svg style="left:1008px;top:351px" width="10" height="12" viewBox="0 0 10 12" fill="none" stroke="#2b2e33" stroke-width="0.9" stroke-linecap="round" stroke-linejoin="round" ><g transform="translate(0.20 0.58)"><path d="M0.700 0.600H5.600L8.300 3.300V10.400H0.700Z"/><path d="M5.400 0.800V3.500H8.100"/></g></svg>
<div class="t" style="left:1022.70px;top:351.68px;font-size:8.5px;line-height:12px;color:#2b2e33;">8</div>
<div class="abs" style="left:21px;top:371.0px;width:1328px;height:1px;background:#f5f5f7"></div>
<div class="t" style="left:41.40px;top:376.94px;font-size:11.5px;line-height:16px;color:#2a2d32;letter-spacing:0.124px;">Lateral Movement</div>
<svg style="left:142px;top:377px" width="12" height="12" viewBox="0 0 12 12" fill="none" stroke="#2b2e33" stroke-width="0.9" stroke-linecap="round" stroke-linejoin="round" ><g transform="translate(0.70 0.24)"><circle cx="5.500" cy="5.500" r="4.900"/><path d="M5.500 5V8"/><path d="M4.600 5H5.500M4.600 8H6.400" stroke-width="0.800"/><circle cx="5.400" cy="3.100" r="0.550" fill="#2b2e33" stroke="none"/></g></svg>
<div class="t" style="left:300.00px;top:377.64px;font-size:11.5px;line-height:16px;color:#3348b8;">1</div>
<div class="abs" style="left:300.0px;top:391.3px;width:4.6px;height:1px;background:#c3cbef"></div>
<div class="t" style="left:433.00px;top:377.64px;font-size:11.5px;line-height:16px;color:#23262b;">0</div>
<div class="abs" style="left:565.4px;top:383.9px;width:6.500px;height:1px;background:#d3d4df"></div>
<div class="abs" style="left:964.1px;top:383.9px;width:6.500px;height:1px;background:#d3d4df"></div>
<div class="abs" style="left:21px;top:399.0px;width:1328px;height:1px;background:#f5f5f7"></div>
<div class="t" style="left:41.40px;top:404.50px;font-size:11.5px;line-height:16px;color:#2a2d32;letter-spacing:0.234px;">Collection</div>
<svg style="left:101px;top:404px" width="12" height="12" viewBox="0 0 12 12" fill="none" stroke="#2b2e33" stroke-width="0.9" stroke-linecap="round" stroke-linejoin="round" ><g transform="translate(0.70 0.80)"><circle cx="5.500" cy="5.500" r="4.900"/><path d="M5.500 5V8"/><path d="M4.600 5H5.500M4.600 8H6.400" stroke-width="0.800"/><circle cx="5.400" cy="3.100" r="0.550" fill="#2b2e33" stroke="none"/></g></svg>
<div class="t" style="left:300.00px;top:405.20px;font-size:11.5px;line-height:16px;color:#3348b8;letter-spacing:-1.592px;">21</div>
<div class="abs" style="left:300.0px;top:418.9px;width:11.2px;height:1px;background:#c3cbef"></div>
<div class="t" style="left:433.00px;top:405.20px;font-size:11.5px;line-height:16px;color:#23262b;">8</div>
<svg style="left:565px;top:402px" width="35.6" height="20" viewBox="0 0 35.6 20" fill="none" stroke="none" stroke-width="0" stroke-linecap="round" stroke-linejoin="round" ><g transform="translate(0.40 0.70)"><rect x="0" y="0" width="34.6" height="19" rx="3.500" fill="#fde7e7" stroke="none"/></g></svg>
<svg style="left:573px;top:406px" width="11" height="12.3" viewBox="0 0 11 12.3" fill="none" stroke="#d63a3a" stroke-width="1.05" stroke-linecap="round" stroke-linejoin="round" ><g transform="translate(0.40 0.25)"><path d="M1.200 3.700L5 0.800L8.800 3.700"/><path d="M1.200 7.100L5 4.200L8.800 7.100"/><path d="M1.200 10.500L5 7.600L8.800 10.500"/></g></svg>
<div class="t" style="left:587.90px;top:406.80px;font-size:8.5px;line-height:12px;color:#d63a3a;">4</div>
<svg style="left:603px;top:402px" width="32.1" height="20" viewBox="0 0 32.1 20" fill="none" stroke="none" stroke-width="0" stroke-linecap="round" stroke-linejoin="round" ><g transform="translate(0.90 0.70)"><rect x="0" y="0" width="31.1" height="19" rx="3.500" fill="#fde9da" stroke="none"/></g></svg>
<svg style="left:611px;top:407px" width="11" height="11" viewBox="0 0 11 11" fill="none" stroke="#e0672a" stroke-width="1.1" stroke-linecap="round" stroke-linejoin="round" ><g transform="translate(0.90 0.20)"><path d="M1.200 4.700L5 1.700L8.800 4.700"/><path d="M1.200 8.500L5 5.500L8.800 8.500"/></g></svg>
<div class="t" style="left:626.40px;top:406.80px;font-size:8.5px;line-height:12px;color:#e0672a;">1</div>
<svg style="left:638px;top:402px" width="35.6" height="20" viewBox="0 0 35.6 20" fill="none" stroke="none" stroke-width="0" stroke-linecap="round" stroke-linejoin="round" ><g transform="translate(0.90 0.70)"><rect x="0" y="0" width="34.6" height="19" rx="3.500" fill="#efede8" stroke="none"/></g></svg>
<svg style="left:646px;top:407px" width="11" height="11" viewBox="0 0 11 11" fill="none" stroke="#6b6558" stroke-width="1.25" stroke-linecap="round" stroke-linejoin="round" ><g transform="translate(0.90 0.20)"><path d="M1.300 6.500L5 3.300L8.700 6.500"/></g></svg>
<div class="t" style="left:661.40px;top:406.80px;font-size:8.5px;line-height:12px;color:#6b6558;">3</div>
<svg style="left:964px;top:402px" width="35" height="20" viewBox="0 0 35 20" fill="none" stroke="none" stroke-width="0" stroke-linecap="round" stroke-linejoin="round" ><g transform="translate(0.10 0.70)"><rect x="0" y="0" width="34.0" height="19" rx="3.500" fill="#efeff2" stroke="none"/></g></svg>
<svg style="left:972px;top:406px" width="11" height="12" viewBox="0 0 11 12" fill="none" stroke="#2b2e33" stroke-width="0.9" stroke-linecap="round" stroke-linejoin="round" ><g transform="translate(0.10 0.70)"><circle cx="5" cy="3.200" r="2.300"/><path d="M0.700 10.200C1.200 7.600 3 6.600 5 6.600S8.800 7.600 9.300 10.200"/></g></svg>
<div class="t" style="left:986.60px;top:406.80px;font-size:8.5px;line-height:12px;color:#2b2e33;">5</div>
<svg style="left:1002px;top:402px" width="35.7" height="20" viewBox="0 0 35.7 20" fill="none" stroke="none" stroke-width="0" stroke-linecap="round" stroke-linejoin="round" ><g transform="translate(0.00 0.70)"><rect x="0" y="0" width="34.7" height="19" rx="3.500" fill="#efeff2" stroke="none"/></g></svg>
<svg style="left:1010px;top:406px" width="10" height="12" viewBox="0 0 10 12" fill="none" stroke="#2b2e33" stroke-width="0.9" stroke-linecap="round" stroke-linejoin="round" ><g transform="translate(0.00 0.70)"><path d="M0.700 0.600H5.600L8.300 3.300V10.400H0.700Z"/><path d="M5.400 0.800V3.500H8.100"/></g></svg>
<div class="t" style="left:1024.50px;top:406.80px;font-size:8.5px;line-height:12px;color:#2b2e33;">3</div>
<div class="abs" style="left:21px;top:426.0px;width:1328px;height:1px;background:#f5f5f7"></div>
<div class="t" style="left:41.40px;top:432.06px;font-size:11.5px;line-height:16px;color:#2a2d32;letter-spacing:0.117px;">Command and Control</div>
<svg style="left:166px;top:432px" width="12" height="12" viewBox="0 0 12 12" fill="none" stroke="#2b2e33" stroke-width="0.9" stroke-linecap="round" stroke-linejoin="round" ><g transform="translate(0.80 0.36)"><circle cx="5.500" cy="5.500" r="4.900"/><path d="M5.500 5V8"/><path d="M4.600 5H5.500M4.600 8H6.400" stroke-width="0.800"/><circle cx="5.400" cy="3.100" r="0.550" fill="#2b2e33" stroke="none"/></g></svg>
<div class="t" style="left:300.00px;top:432.76px;font-size:11.5px;line-height:16px;color:#3348b8;">0</div>
<div class="abs" style="left:300.0px;top:446.5px;width:6.5px;height:1px;background:#c3cbef"></div>
<div class="t" style="left:433.00px;top:432.76px;font-size:11.5px;line-height:16px;color:#23262b;">0</div>
<div class="abs" style="left:565.4px;top:439.1px;width:6.500px;height:1px;background:#d3d4df"></div>
<div class="abs" style="left:964.1px;top:439.1px;width:6.500px;height:1px;background:#d3d4df"></div>
<div class="abs" style="left:21px;top:454.0px;width:1328px;height:1px;background:#f5f5f7"></div>
<div class="t" style="left:41.40px;top:459.62px;font-size:11.5px;line-height:16px;color:#2a2d32;letter-spacing:0.110px;">Exfiltration</div>
<svg style="left:104px;top:459px" width="12" height="12" viewBox="0 0 12 12" fill="none" stroke="#2b2e33" stroke-width="0.9" stroke-linecap="round" stroke-linejoin="round" ><g transform="translate(0.10 0.92)"><circle cx="5.500" cy="5.500" r="4.900"/><path d="M5.500 5V8"/><path d="M4.600 5H5.500M4.600 8H6.400" stroke-width="0.800"/><circle cx="5.400" cy="3.100" r="0.550" fill="#2b2e33" stroke="none"/></g></svg>
<div class="t" style="left:300.00px;top:460.32px;font-size:11.5px;line-height:16px;color:#3348b8;">7</div>
<div class="abs" style="left:300.0px;top:474.0px;width:5.8px;height:1px;background:#c3cbef"></div>
<div class="t" style="left:433.00px;top:460.32px;font-size:11.5px;line-height:16px;color:#23262b;">0</div>
<div class="abs" style="left:565.4px;top:466.6px;width:6.500px;height:1px;background:#d3d4df"></div>
<div class="abs" style="left:964.1px;top:466.6px;width:6.500px;height:1px;background:#d3d4df"></div>
<div class="abs" style="left:21px;top:481.0px;width:1328px;height:1px;background:#f5f5f7"></div>
<div class="t" style="left:41.40px;top:487.18px;font-size:11.5px;line-height:16px;color:#2a2d32;letter-spacing:0.218px;">Impact</div>
<svg style="left:84px;top:487px" width="12" height="12" viewBox="0 0 12 12" fill="none" stroke="#2b2e33" stroke-width="0.9" stroke-linecap="round" stroke-linejoin="round" ><g transform="translate(0.00 0.48)"><circle cx="5.500" cy="5.500" r="4.900"/><path d="M5.500 5V8"/><path d="M4.600 5H5.500M4.600 8H6.400" stroke-width="0.800"/><circle cx="5.400" cy="3.100" r="0.550" fill="#2b2e33" stroke="none"/></g></svg>
<div class="t" style="left:300.00px;top:487.88px;font-size:11.5px;line-height:16px;color:#3348b8;letter-spacing:-0.992px;">10</div>
<div class="abs" style="left:300.0px;top:501.6px;width:11.8px;height:1px;background:#c3cbef"></div>
<div class="t" style="left:433.00px;top:487.88px;font-size:11.5px;line-height:16px;color:#23262b;">3</div>
<svg style="left:565px;top:485px" width="35.6" height="20" viewBox="0 0 35.6 20" fill="none" stroke="none" stroke-width="0" stroke-linecap="round" stroke-linejoin="round" ><g transform="translate(0.40 0.38)"><rect x="0" y="0" width="34.6" height="19" rx="3.500" fill="#fde7e7" stroke="none"/></g></svg>
<svg style="left:573px;top:488px" width="11" height="12.3" viewBox="0 0 11 12.3" fill="none" stroke="#d63a3a" stroke-width="1.05" stroke-linecap="round" stroke-linejoin="round" ><g transform="translate(0.40 0.93)"><path d="M1.200 3.700L5 0.800L8.800 3.700"/><path d="M1.200 7.100L5 4.200L8.800 7.100"/><path d="M1.200 10.500L5 7.600L8.800 10.500"/></g></svg>
<div class="t" style="left:587.90px;top:489.48px;font-size:8.5px;line-height:12px;color:#d63a3a;">3</div>
<svg style="left:964px;top:485px" width="35" height="20" viewBox="0 0 35 20" fill="none" stroke="none" stroke-width="0" stroke-linecap="round" stroke-linejoin="round" ><g transform="translate(0.10 0.38)"><rect x="0" y="0" width="34.0" height="19" rx="3.500" fill="#efeff2" stroke="none"/></g></svg>
<svg style="left:972px;top:489px" width="10" height="12" viewBox="0 0 10 12" fill="none" stroke="#2b2e33" stroke-width="0.9" stroke-linecap="round" stroke-linejoin="round" ><g transform="translate(0.10 0.38)"><path d="M0.700 0.600H5.600L8.300 3.300V10.400H0.700Z"/><path d="M5.400 0.800V3.500H8.100"/></g></svg>
<div class="t" style="left:986.60px;top:489.48px;font-size:8.5px;line-height:12px;color:#2b2e33;">3</div>
</div>
</div>
</body></html>
